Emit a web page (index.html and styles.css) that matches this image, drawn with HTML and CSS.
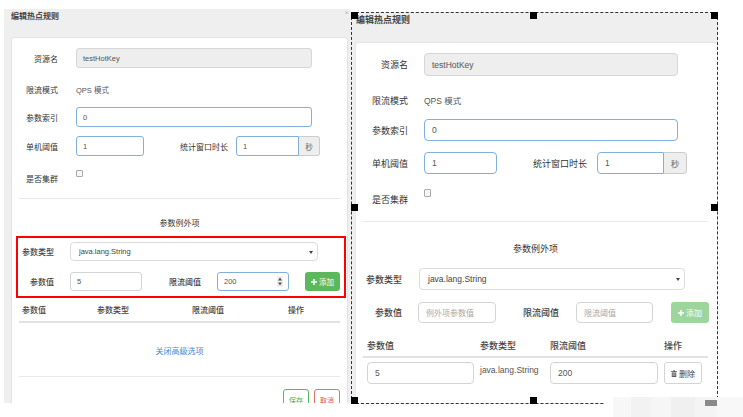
FILE: index.html
```html
<!DOCTYPE html>
<html lang="zh-CN">
<head>
<meta charset="utf-8">
<title>编辑热点规则</title>
<link rel="stylesheet" href="styles.css">
</head>
<body>
<div class="stage">
  <section class="modal lm">
    <div class="mhead"><span class="mtitle">编辑热点规则</span><span class="mclose">×</span></div>
    <div class="card">
      <div class="frow r1"><span class="lbl">资源名</span><span class="inp ro w-full">testHotKey</span></div>
      <div class="frow r2"><span class="lbl">限流模式</span><span class="static">QPS 模式</span></div>
      <div class="frow r3"><span class="lbl">参数索引</span><span class="inp focus w-full">0</span></div>
      <div class="frow r4"><span class="lbl">单机阈值</span><span class="inp focus w-sm">1</span><span class="lbl2">统计窗口时长</span><span class="inp focus w-win">1</span><span class="addon">秒</span></div>
      <div class="frow r5"><span class="lbl">是否集群</span><span class="chk"></span></div>
      <div class="sep s1"></div>
      <div class="sect">参数例外项</div>
      <div class="exc">
        <div class="erow e1"><span class="elbl">参数类型</span><span class="sel">java.lang.String<i class="caret"></i></span></div>
        <div class="erow e2"><span class="elbl">参数值</span><span class="inp c1">5</span><span class="elbl2">限流阈值</span><span class="inp focus c2">200<svg class="spin" viewBox="0 0 6 11"><rect width="6" height="11" fill="#eee"/><path d="M3 1.5L5 4.5H1z M3 9.5L5 6.5H1z" fill="#555"/></svg></span><span class="btn-add"><svg class="ico-plus" viewBox="0 0 8 8"><path d="M3 0h2v3h3v2H5v3H3V5H0V3h3z" fill="#fff"/></svg>添加</span></div>
      </div>
      <div class="thead"><span>参数值</span><span>参数类型</span><span>限流阈值</span><span>操作</span></div>
      <div class="more">关闭高级选项</div>
      <div class="sep s2"></div>
      <div class="foot"><span class="btn btn-save">保存</span><span class="btn btn-cancel">取消</span></div>
    </div>
  </section>

  <section class="modal rm">
    <div class="mhead"><span class="mtitle">编辑热点规则</span></div>
    <div class="card">
      <div class="frow r1"><span class="lbl">资源名</span><span class="inp ro w-full">testHotKey</span></div>
      <div class="frow r2"><span class="lbl">限流模式</span><span class="static">QPS 模式</span></div>
      <div class="frow r3"><span class="lbl">参数索引</span><span class="inp focus w-full">0</span></div>
      <div class="frow r4"><span class="lbl">单机阈值</span><span class="inp focus w-sm">1</span><span class="lbl2">统计窗口时长</span><span class="inp focus w-win">1</span><span class="addon">秒</span></div>
      <div class="frow r5"><span class="lbl">是否集群</span><span class="chk"></span></div>
      <div class="sep s1"></div>
      <div class="sect">参数例外项</div>
      <div class="exc">
        <div class="erow e1"><span class="elbl">参数类型</span><span class="sel">java.lang.String<i class="caret"></i></span></div>
        <div class="erow e2"><span class="elbl">参数值</span><span class="inp ph c1">例外项参数值</span><span class="elbl2">限流阈值</span><span class="inp ph c2">限流阈值</span><span class="btn-add off"><svg class="ico-plus" viewBox="0 0 8 8"><path d="M3 0h2v3h3v2H5v3H3V5H0V3h3z" fill="#fff"/></svg>添加</span></div>
      </div>
      <div class="thead"><span>参数值</span><span>参数类型</span><span>限流阈值</span><span>操作</span></div>
      <div class="trow">
        <span class="cell"><span class="inp tin">5</span></span>
        <span class="cell ttext">java.lang.String</span>
        <span class="cell"><span class="inp tin2">200</span></span>
        <span class="cell"><span class="btn-del"><svg class="ico-trash" viewBox="0 0 8 9"><path d="M0 1.4h8v1H0z M3 0h2v1.4H3z M1 3h6v6H1z" fill="#555"/><path d="M2.6 4v4M4 4v4M5.4 4v4" stroke="#fff" stroke-width=".6"/></svg>删除</span></span>
      </div>
    </div>
    <i class="h h-tl"></i><i class="h h-tm"></i><i class="h h-tr"></i>
    <i class="h h-ml"></i><i class="h h-mr"></i>
    <i class="h h-bl"></i><i class="h h-bm"></i><i class="h h-br"></i>
  </section>
</div>
<div class="mosaic"><i class="mblock"></i></div>
</body>
</html>
```

FILE: styles.css
```css
* { box-sizing: border-box; margin: 0; padding: 0; }
html, body { background: #fff; }
body {
  margin: 0;
  width: 743px;
  height: 417px;
  overflow: hidden;
  position: relative;
  font-family: "Liberation Sans", "Noto Sans CJK SC", sans-serif;
  color: #333;
}
.stage { display: flex; align-items: flex-start; }

.modal {
  background: #efefef;
  position: relative;
  display: flex;
  flex-direction: column;
}
.card {
  flex: 1;
  background: #fff;
  display: flex;
  flex-direction: column;
}
.frow, .erow { display: flex; align-items: center; flex: none; }
.lbl, .lbl2, .elbl, .elbl2 { text-align: right; white-space: nowrap; flex: none; }
.inp {
  display: flex;
  align-items: center;
  flex: none;
  border: 1px solid #d4d4d4;
  background: #fff;
  color: #555;
  white-space: nowrap;
  position: relative;
}
.inp.ro { background: #eee; border-color: #d6d6d6; }
.inp.focus { border-color: #7fb0df; }
.inp.ph { color: #a8a8a8; }
.addon {
  display: flex; align-items: center; justify-content: center;
  background: #eee; border: 1px solid #ccc; border-left: 0; color: #666; flex: none;
}
.chk {
  align-self: flex-start;
  border: 1px solid #a9a9a9;
  border-radius: 1px;
  background: #f6f6f6;
  flex: none;
}
.sep { height: 1px; background: #e9e9e9; flex: none; }
.sect { text-align: center; flex: none; }
.sel {
  position: relative;
  display: flex; align-items: center;
  border: 1px solid #dcdcdc;
  color: #444;
  flex: none;
}
.caret {
  position: absolute;
  top: 50%;
  margin-top: -1px;
  width: 0; height: 0;
  border-left: 2px solid transparent;
  border-right: 2px solid transparent;
  border-top: 3px solid #444;
}
.btn-add {
  display: flex; align-items: center; justify-content: center;
  background: #5cb85c; color: #fff; border-radius: 3px; flex: none;
}
.btn-add.off { background: #9dd59d; }
.ico-plus { flex: none; }
.thead { display: grid; align-items: end; border-bottom: 2px solid #e2e2e2; flex: none; }
.more { text-align: center; color: #3f8ad6; flex: none; }
.foot { display: flex; justify-content: flex-end; flex: none; }
.btn {
  display: flex; align-items: center; justify-content: center;
  background: #fff; border: 1px solid; border-radius: 3px;
}
.btn-save { color: #4cae4c; border-color: #5cb85c; }
.btn-cancel { color: #d9534f; border-color: #e3716d; }

/* ---------- left dialog ---------- */
.lm { margin-left: 4px; margin-top: 9px; width: 347px; height: 394px; font-size: 8px; overflow: hidden; }
.lm .mhead { height: 28px; padding-left: 7px; flex: none; }
.lm .mtitle { line-height: 16px; font-weight: bold; color: #444; }
.lm .mclose { position: absolute; top: 0; right: 2px; font-size: 8px; line-height: 7px; color: #b5b5b5; }
.lm .card {
  margin: 0 3px 0 7px;
  border: 1px solid #e3e3e3; border-bottom: 0;
  border-radius: 3px 3px 0 0;
  padding: 10px 7px 0;
}
.lm .frow { height: 20px; }
.lm .lbl { width: 39px; margin-right: 18px; }
.lm .inp { height: 20px; border-radius: 3px; padding-left: 6px; font-size: 7.5px; }
.lm .w-full { width: 236px; }
.lm .static { font-size: 7.5px; color: #555; }
.lm .r2 { margin-top: 11px; }
.lm .r3 { margin-top: 8px; }
.lm .r4 { margin-top: 9px; }
.lm .r5 { margin-top: 12px; }
.lm .w-sm { width: 68px; }
.lm .lbl2 { width: 84px; margin-right: 8px; }
.lm .w-win { width: 63px; border-radius: 3px 0 0 3px; }
.lm .addon { width: 21px; height: 20px; border-radius: 0 3px 3px 0; font-size: 7.5px; }
.lm .chk { width: 7px; height: 7px; margin-top: 2px; }
.lm .s1 { margin-top: 10px; }
.lm .sect { margin-top: 15px; height: 20px; line-height: 20px; }
.lm .exc { margin: 2px -6px 0 -3px; border: 2px solid #f00; padding: 4px 0 5px; flex: none; }
.lm .e1 { height: 19px; }
.lm .e2 { height: 19px; margin-top: 11px; }
.lm .elbl { width: 36px; margin-right: 16px; font-weight: 500; color: #444; }
.lm .sel { width: 248px; height: 19px; border-radius: 4px; padding-left: 8px; font-size: 7.5px; }
.lm .caret { right: 4px; }
.lm .inp.c1, .lm .inp.c2 { width: 72px; height: 19px; }
.lm .elbl2 { width: 59px; margin-right: 16px; font-weight: 500; color: #444; }
.lm .spin { position: absolute; right: 5px; top: 3px; width: 6px; height: 11px; }
.lm .btn-add { margin-left: 16px; width: 35px; height: 19px; font-size: 7.5px; }
.lm .ico-plus { width: 6px; height: 6px; margin-right: 2px; }
.lm .thead {
  grid-template-columns: 75px 95px 96px 55px;
  height: 25px; padding-bottom: 4px; line-height: 12px; font-weight: 500; color: #444;
}
.lm .thead span { padding-left: 3px; }
.lm .more { margin-top: 19px; height: 20px; line-height: 20px; }
.lm .s2 { margin-top: 14px; }
.lm .foot { margin-top: 12px; gap: 5px; }
.lm .btn { width: 26px; height: 22px; font-size: 7px; }

/* ---------- right dialog (selected) ---------- */
.rm {
  margin-top: 12px; width: 367px; height: 392px;
  border: 1px dashed #333;
  font-size: 9px;
}
.rm .mhead { height: 29px; padding-left: 4px; flex: none; }
.rm .mtitle { line-height: 14px; font-weight: bold; color: #444; }
.rm .card {
  margin-left: 3px;
  border-left: 1px solid #e6e6e6; border-top: 1px solid #e6e6e6;
  border-radius: 3px 0 0 0;
  padding: 10px 9px 0 7px;
}
.rm .frow { height: 22px; }
.rm .r1 { height: 23px; }
.rm .lbl { width: 45px; margin-right: 16px; }
.rm .inp { height: 22px; border-radius: 4px; padding-left: 7px; font-size: 8.5px; }
.rm .r1 .inp { height: 23px; }
.rm .w-full { width: 254px; }
.rm .static { font-size: 8.5px; color: #555; }
.rm .r2 { margin-top: 13px; }
.rm .r3 { margin-top: 8px; }
.rm .r4 { margin-top: 11px; }
.rm .r5 { margin-top: 14px; }
.rm .w-sm { width: 73px; }
.rm .lbl2 { width: 90px; margin-right: 10px; }
.rm .w-win { width: 67px; border-radius: 4px 0 0 4px; }
.rm .addon { width: 23px; height: 22px; border-radius: 0 4px 4px 0; font-size: 8.5px; }
.rm .chk { width: 7px; height: 8px; margin-top: 1px; }
.rm .s1 { margin-top: 11px; }
.rm .sect { margin-top: 16px; height: 22px; line-height: 22px; }
.rm .exc { margin-top: 8px; flex: none; }
.rm .e1 { height: 22px; }
.rm .e2 { height: 21px; margin-top: 12px; }
.rm .elbl { width: 39px; margin-right: 17px; font-weight: 500; color: #444; }
.rm .e2 .elbl { margin-right: 16px; }
.rm .sel { width: 266px; height: 22px; border-radius: 4px; padding-left: 8px; font-size: 8.5px; }
.rm .caret { right: 4px; }
.rm .inp.c1 { width: 78px; height: 21px; font-size: 8px; }
.rm .elbl2 { width: 63px; margin-right: 17px; font-weight: 500; color: #444; }
.rm .inp.c2 { width: 77px; height: 21px; font-size: 8px; }
.rm .btn-add { margin-left: 18px; width: 38px; height: 21px; font-size: 8px; }
.rm .ico-plus { width: 6px; height: 6px; margin-right: 2px; }
.rm .thead {
  grid-template-columns: 113px 70px 114px 48px;
  height: 35px; padding-bottom: 4px; line-height: 12px; font-weight: 500; color: #444;
}
.rm .thead span { padding-left: 4px; }
.rm .trow { display: grid; grid-template-columns: 113px 70px 114px 48px; padding-top: 4px; flex: none; }
.rm .cell { padding-left: 4px; }
.rm .tin { width: 107px; }
.rm .tin2 { width: 108px; }
.rm .ttext { font-size: 8.5px; color: #555; padding-top: 2px; line-height: 12px; }
.rm .btn-del {
  display: flex; align-items: center; justify-content: center;
  width: 38px; height: 22px; border: 1px solid #d4d4d4; border-radius: 3px;
  font-size: 8px; color: #444;
}
.rm .ico-trash { width: 6px; height: 7px; margin-right: 2px; }

.h { position: absolute; width: 7px; height: 7px; background: #000; }
.h-tl { left: -1px; top: -1px; }
.h-tm { left: 178px; top: -1px; }
.h-tr { right: -1px; top: -1px; }
.h-ml { left: -1px; top: 191px; }
.h-mr { right: -1px; top: 191px; }
.h-bl { left: -1px; bottom: -1px; }
.h-bm { left: 178px; bottom: -1px; }
.h-br { right: -1px; bottom: -1px; }

.mosaic {
  position: absolute;
  left: 605px; top: 397px; width: 138px; height: 20px;
  background: linear-gradient(90deg, #fff 0 8px, #f7f7f7 8px 26px, #f2f2f2 26px 46px, #f6f6f6 46px 66px, #f0f0f0 66px 90px, #f4f4f4 90px 112px, #f8f8f8 112px);
}
.mblock { position: absolute; left: 100px; top: 3px; width: 12px; height: 6px; background: #8a8a8a; }
```
